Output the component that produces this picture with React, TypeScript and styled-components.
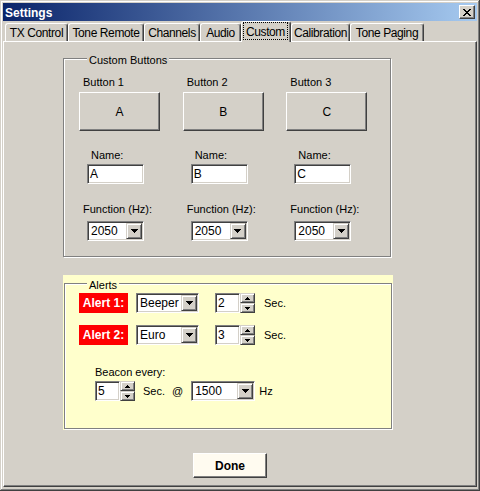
import React from 'react';
import styled, { createGlobalStyle, css } from 'styled-components';

const GlobalStyle = createGlobalStyle`
  html, body {
    margin: 0;
    padding: 0;
    background: #d4d0c8;
  }
  body {
    font-family: "Liberation Sans", Arial, sans-serif;
    font-size: 11px;
    color: #000;
  }
  * {
    box-sizing: border-box;
  }
`;

const raised = css`
  border: 1px solid;
  border-color: #fff #404040 #404040 #fff;
  box-shadow: inset -1px -1px #808080;
`;

const raisedSoft = css`
  border: 1px solid;
  border-color: #d4d0c8 #404040 #404040 #d4d0c8;
  box-shadow: inset 1px 1px #fff, inset -1px -1px #808080;
  background: #d4d0c8;
`;

const sunken = css`
  border: 1px solid;
  border-color: #808080 #fff #fff #808080;
  box-shadow: inset 1px 1px #404040, inset -1px -1px #d4d0c8;
  background: #fff;
`;

const Window = styled.div`
  width: 480px;
  height: 491px;
  display: flex;
  flex-direction: column;
  padding: 3px 3px 4px 3px;
  background: #d4d0c8;
  box-shadow: inset -1px -1px #404040, inset 1px 1px #d4d0c8,
    inset -2px -2px #808080, inset 2px 2px #fff;
`;

const TitleBar = styled.div`
  flex: none;
  height: 18px;
  display: flex;
  align-items: center;
  justify-content: space-between;
  padding: 1px 2px 0 2px;
  background: linear-gradient(to right, #0a246a, #a6caf0);
  color: #fff;
  font-weight: bold;
  font-size: 12px;
`;

const CloseButton = styled.div`
  width: 16px;
  height: 14px;
  margin-top: -1px;
  display: flex;
  align-items: center;
  justify-content: center;
  background: #d4d0c8;
  ${raised};
`;

const TabStrip = styled.div`
  flex: none;
  height: 20px;
  display: flex;
  align-items: flex-end;
  padding-left: 2px;
`;

const Tab = styled.div<{ $width: number; $active?: boolean }>`
  width: ${({ $width }) => $width}px;
  height: ${({ $active }) => ($active ? 21 : 18)}px;
  margin-bottom: ${({ $active }) => ($active ? -1 : 0)}px;
  position: relative;
  z-index: ${({ $active }) => ($active ? 1 : 0)};
  display: flex;
  align-items: stretch;
  padding: ${({ $active }) => ($active ? '0 2px 2px 1px' : '0 1px 0 1px')};
  background: #d4d0c8;
  border-top: 1px solid #fff;
  border-left: 1px solid #fff;
  border-right: 1px solid #404040;
  border-radius: 3px 3px 0 0;
  box-shadow: inset -1px 0 #808080;
  font-size: 12px;
  letter-spacing: -0.4px;
  white-space: nowrap;
`;

const TabLabel = styled.span<{ $focused?: boolean }>`
  flex: 1;
  display: flex;
  align-items: center;
  justify-content: center;
  padding-top: 1px;
  border: 1px ${({ $focused }) => ($focused ? 'dotted #000' : 'solid transparent')};
`;

const Panel = styled.div`
  flex: 1;
  display: flex;
  flex-direction: column;
  align-items: flex-start;
  padding: 10px 0 0 59px;
  border-top: 1px solid #fff;
  border-left: 1px solid #fff;
  border-right: 1px solid #404040;
  border-bottom: 1px solid #404040;
  box-shadow: inset -1px -1px #808080;
`;

const GroupBox = styled.fieldset<{ $width: number; $pad: string }>`
  width: ${({ $width }) => $width}px;
  min-width: 0;
  margin: 0;
  padding: ${({ $pad }) => $pad};
  border: 1px solid #808080;
  box-shadow: 1px 1px 0 #fff, inset 1px 1px 0 #fff;
`;

const Legend = styled.legend<{ $bg: string }>`
  margin-left: 8px;
  padding: 3px 2px 0 2px;
  line-height: 10px;
  background: ${({ $bg }) => $bg};
`;

const ButtonColumns = styled.div`
  display: flex;
`;

const Column = styled.div`
  width: 104px;
  display: flex;
  flex-direction: column;
  align-items: flex-start;
`;

const Caption = styled.div<{ $indent: number; $gap?: number }>`
  line-height: 13px;
  margin-left: ${({ $indent }) => $indent}px;
  margin-top: ${({ $gap = 0 }) => $gap}px;
  white-space: nowrap;
`;

const PushButton = styled.div`
  width: 81px;
  height: 39px;
  margin-top: 3px;
  display: flex;
  align-items: center;
  justify-content: center;
  font-size: 12px;
  background: #d4d0c8;
  ${raised};
`;

const TextBox = styled.div`
  width: 57px;
  height: 20px;
  margin: 2px 0 0 8px;
  padding: 0 2px;
  display: flex;
  align-items: center;
  font-size: 12px;
  ${sunken};
`;

const Combo = styled.div<{ $width: number }>`
  width: ${({ $width }) => $width}px;
  height: 20px;
  flex: none;
  display: flex;
  align-items: center;
  padding: 1px;
  ${sunken};
`;

const ComboValue = styled.span`
  flex: 1;
  padding-left: 2px;
  font-size: 12px;
`;

const DropButton = styled.div`
  width: 16px;
  height: 16px;
  display: flex;
  align-items: center;
  justify-content: center;
  ${raisedSoft};
`;

const FunctionCombo = styled.div`
  margin: 5px 0 0 8px;
`;

const AlertsArea = styled.div`
  margin-top: 18px;
  padding: 2px 1px 1px 1px;
  background: #ffffcc;
`;

const AlertRow = styled.div<{ $gap?: number; $indent?: number }>`
  display: flex;
  align-items: center;
  height: 20px;
  margin-top: ${({ $gap = 0 }) => $gap}px;
  margin-left: ${({ $indent = 0 }) => $indent}px;
`;

const AlertTag = styled.div`
  width: 49px;
  height: 20px;
  display: flex;
  align-items: center;
  justify-content: center;
  background: #ff0000;
  color: #fff;
  font-weight: bold;
  font-size: 12px;
  margin-right: 8px;
`;

const Spacer = styled.span<{ $w: number }>`
  flex: none;
  width: ${({ $w }) => $w}px;
`;

const Spinner = styled.div<{ $after: number }>`
  display: flex;
  height: 20px;
  margin-right: ${({ $after }) => $after}px;
`;

const SpinEdit = styled.div`
  width: 25px;
  height: 20px;
  display: flex;
  align-items: center;
  padding: 0 2px;
  font-size: 12px;
  ${sunken};
`;

const SpinButtons = styled.div`
  width: 15px;
  display: flex;
  flex-direction: column;
`;

const SpinButton = styled.div`
  height: 10px;
  display: flex;
  align-items: center;
  justify-content: center;
  ${raisedSoft};
`;

const Unit = styled.span<{ $before?: number; $after?: number }>`
  margin-left: ${({ $before = 0 }) => $before}px;
  margin-right: ${({ $after = 0 }) => $after}px;
  white-space: nowrap;
`;

const DoneButton = styled.div`
  width: 74px;
  height: 25px;
  margin: 23px 0 0 130px;
  display: flex;
  align-items: center;
  justify-content: center;
  background: #fffbf0;
  font-weight: bold;
  font-size: 12px;
  border: 1px solid;
  border-color: #fff #404040 #404040 #fff;
  box-shadow: inset -1px -1px #808080;
`;

const CloseGlyph = () => (
  <svg width="8" height="7" viewBox="0 0 8 7" shapeRendering="crispEdges">
    <path
      d="M0 0h2v1H0zM6 0h2v1H6zM1 1h2v1H1zM5 1h2v1H5zM2 2h4v1H2zM3 3h2v1H3zM2 4h4v1H2zM1 5h2v1H1zM5 5h2v1H5zM0 6h2v1H0zM6 6h2v1H6z"
      fill="#000"
    />
  </svg>
);

const DownArrow = () => (
  <svg width="7" height="4" viewBox="0 0 7 4" shapeRendering="crispEdges">
    <path d="M0 0h7v1H0zM1 1h5v1H1zM2 2h3v1H2zM3 3h1v1H3z" fill="#000" />
  </svg>
);

const SpinArrow = ({ up }: { up?: boolean }) => (
  <svg width="5" height="3" viewBox="0 0 5 3" shapeRendering="crispEdges">
    <path
      d={up ? 'M2 0h1v1H2zM1 1h3v1H1zM0 2h5v1H0z' : 'M0 0h5v1H0zM1 1h3v1H1zM2 2h1v1H2z'}
      fill="#000"
    />
  </svg>
);

const ComboBox = ({ value, width }: { value: string; width: number }) => (
  <Combo $width={width}>
    <ComboValue>{value}</ComboValue>
    <DropButton>
      <DownArrow />
    </DropButton>
  </Combo>
);

const SpinBox = ({ value, after }: { value: string; after: number }) => (
  <Spinner $after={after}>
    <SpinEdit>{value}</SpinEdit>
    <SpinButtons>
      <SpinButton>
        <SpinArrow up />
      </SpinButton>
      <SpinButton>
        <SpinArrow />
      </SpinButton>
    </SpinButtons>
  </Spinner>
);

const tabs = [
  { label: 'TX Control', width: 63 },
  { label: 'Tone Remote', width: 76 },
  { label: 'Channels', width: 56 },
  { label: 'Audio', width: 41 },
  { label: 'Custom', width: 50, active: true },
  { label: 'Calibration', width: 59 },
  { label: 'Tone Paging', width: 74 },
];

const customButtons = [
  { n: 1, key: 'A', freq: '2050' },
  { n: 2, key: 'B', freq: '2050' },
  { n: 3, key: 'C', freq: '2050' },
];

const alerts = [
  { label: 'Alert 1:', tone: 'Beeper', secs: '2' },
  { label: 'Alert 2:', tone: 'Euro', secs: '3' },
];

const App: React.FC = () => {
  return (
    <>
      <GlobalStyle />
      <Window>
        <TitleBar>
          <span>Settings</span>
          <CloseButton>
            <CloseGlyph />
          </CloseButton>
        </TitleBar>

        <TabStrip>
          {tabs.map((t) => (
            <Tab key={t.label} $width={t.width} $active={t.active}>
              <TabLabel $focused={t.active}>{t.label}</TabLabel>
            </Tab>
          ))}
        </TabStrip>

        <Panel>
          <GroupBox $width={328} $pad="11px 0 15px 15px">
            <Legend $bg="#d4d0c8">Custom Buttons</Legend>
            <ButtonColumns>
              {customButtons.map((b) => (
                <Column key={b.n}>
                  <Caption $indent={4}>Button {b.n}</Caption>
                  <PushButton>{b.key}</PushButton>
                  <Caption $indent={12} $gap={18}>
                    Name:
                  </Caption>
                  <TextBox>{b.key}</TextBox>
                  <Caption $indent={4} $gap={19}>
                    Function (Hz):
                  </Caption>
                  <FunctionCombo>
                    <ComboBox value={b.freq} width={57} />
                  </FunctionCombo>
                </Column>
              ))}
            </ButtonColumns>
          </GroupBox>

          <AlertsArea>
            <GroupBox $width={328} $pad="3px 0 27px 14px">
              <Legend $bg="#ffffcc">Alerts</Legend>
              {alerts.map((a, i) => (
                <AlertRow key={a.label} $gap={i === 0 ? 0 : 12}>
                  <AlertTag>{a.label}</AlertTag>
                  <ComboBox value={a.tone} width={63} />
                  <Spacer $w={16} />
                  <SpinBox value={a.secs} after={9} />
                  <Unit>Sec.</Unit>
                </AlertRow>
              ))}
              <Caption $indent={16} $gap={21}>
                Beacon every:
              </Caption>
              <AlertRow $gap={2} $indent={16}>
                <SpinBox value="5" after={8} />
                <Unit $after={7}>Sec.</Unit>
                <Unit $after={8}>@</Unit>
                <ComboBox value="1500" width={64} />
                <Unit $before={4}>Hz</Unit>
              </AlertRow>
            </GroupBox>
          </AlertsArea>

          <DoneButton>Done</DoneButton>
        </Panel>
      </Window>
    </>
  );
};

export default App;
